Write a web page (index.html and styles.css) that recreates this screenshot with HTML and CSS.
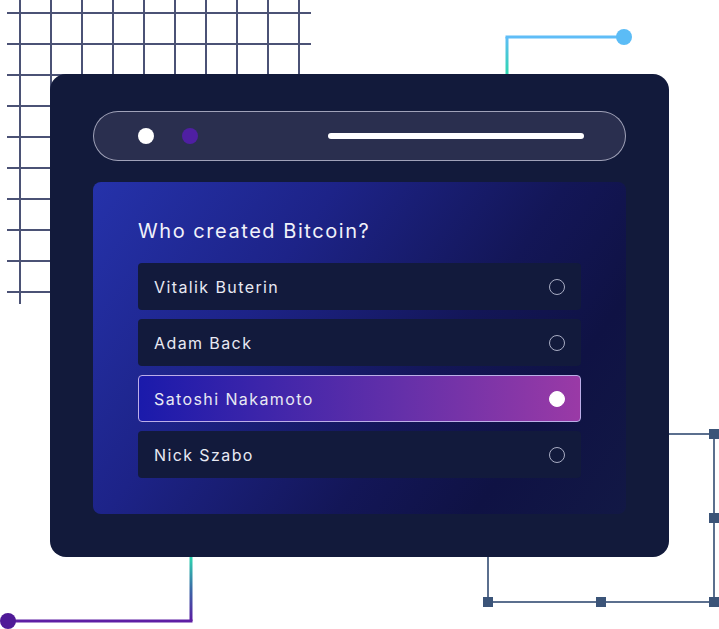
FILE: index.html
```html
<!DOCTYPE html>
<html lang="en">
<head>
<meta charset="utf-8">
<title>Quiz</title>
<link rel="stylesheet" href="styles.css">
</head>
<body>
<div class="stage">
  <svg class="decor" width="719" height="629" viewBox="0 0 719 629" aria-hidden="true">
    <defs>
      <linearGradient id="gTop" x1="0" y1="74" x2="0" y2="37" gradientUnits="userSpaceOnUse">
        <stop offset="0" stop-color="#2ed6b0"/>
        <stop offset="1" stop-color="#5fbdf7"/>
      </linearGradient>
      <linearGradient id="gBot" x1="0" y1="557" x2="0" y2="621" gradientUnits="userSpaceOnUse">
        <stop offset="0" stop-color="#2ed6b0"/>
        <stop offset="0.5" stop-color="#3a6aa6"/>
        <stop offset="1" stop-color="#5a1ca2"/>
      </linearGradient>
    </defs>
    <g class="grid" stroke="#4b5275" stroke-width="2">
      <line x1="20" y1="0" x2="20" y2="304"/>
      <line x1="51" y1="0" x2="51" y2="304"/>
      <line x1="82" y1="0" x2="82" y2="304"/>
      <line x1="113" y1="0" x2="113" y2="304"/>
      <line x1="144" y1="0" x2="144" y2="304"/>
      <line x1="175" y1="0" x2="175" y2="304"/>
      <line x1="206" y1="0" x2="206" y2="304"/>
      <line x1="237" y1="0" x2="237" y2="304"/>
      <line x1="268" y1="0" x2="268" y2="304"/>
      <line x1="299" y1="0" x2="299" y2="304"/>
      <line x1="7" y1="13" x2="311" y2="13"/>
      <line x1="7" y1="44" x2="311" y2="44"/>
      <line x1="7" y1="75" x2="311" y2="75"/>
      <line x1="7" y1="106" x2="311" y2="106"/>
      <line x1="7" y1="137" x2="311" y2="137"/>
      <line x1="7" y1="168" x2="311" y2="168"/>
      <line x1="7" y1="199" x2="311" y2="199"/>
      <line x1="7" y1="230" x2="311" y2="230"/>
      <line x1="7" y1="261" x2="311" y2="261"/>
      <line x1="7" y1="292" x2="311" y2="292"/>
    </g>
    <line x1="507" y1="80" x2="507" y2="37" stroke="url(#gTop)" stroke-width="3"/>
    <line x1="505.5" y1="37" x2="624" y2="37" stroke="#5fbdf7" stroke-width="3"/>
    <circle cx="624" cy="37" r="8" fill="#5bbcf6"/>

    <line x1="191" y1="550" x2="191" y2="621" stroke="url(#gBot)" stroke-width="3"/>
    <line x1="8" y1="621" x2="192.5" y2="621" stroke="#5e1fa4" stroke-width="3"/>
    <circle cx="8" cy="621" r="8" fill="#4f1a97"/>

    <path d="M660 434 H714 V602 H488 V540" fill="none" stroke="#5b6f8e" stroke-width="2"/>
    <g fill="#3b5478">
      <rect x="709" y="429" width="10" height="10"/>
      <rect x="709" y="513" width="10" height="10"/>
      <rect x="709" y="597" width="10" height="10"/>
      <rect x="596" y="597" width="10" height="10"/>
      <rect x="483" y="597" width="10" height="10"/>
    </g>
  </svg>

  <div class="card">
    <div class="bar">
      <span class="dot dot-white"></span>
      <span class="dot dot-purple"></span>
      <span class="bar-line"></span>
    </div>
    <div class="panel">
      <h2 class="question">Who created Bitcoin?</h2>
      <ul class="options">
        <li class="option"><span>Vitalik Buterin</span><span class="radio"></span></li>
        <li class="option"><span>Adam Back</span><span class="radio"></span></li>
        <li class="option selected"><span>Satoshi Nakamoto</span><span class="radio"></span></li>
        <li class="option"><span>Nick Szabo</span><span class="radio"></span></li>
      </ul>
    </div>
  </div>
</div>
</body>
</html>
```
FILE: styles.css
```css
* { box-sizing: border-box; }
html, body { margin: 0; padding: 0; background: #ffffff; }
body { font-family: Inter, "Open Sans", sans-serif; }

.stage {
  position: relative;
  width: 719px;
  height: 629px;
  overflow: hidden;
  padding: 74px 0 0 50px;
}
.decor {
  position: absolute;
  left: 0;
  top: 0;
}

.card {
  position: relative;
  width: 619px;
  height: 483px;
  background: #121a3b;
  border-radius: 16px;
  padding: 37px 43px 43px;
  display: flex;
  flex-direction: column;
  gap: 21px;
}

.bar {
  height: 50px;
  flex: none;
  border: 1px solid rgba(200, 202, 220, 0.75);
  background: #2a2f4f;
  border-radius: 26px;
  display: flex;
  align-items: center;
  padding: 0 41px 0 44px;
}
.dot {
  width: 16px;
  height: 16px;
  border-radius: 50%;
  flex: none;
}
.dot-white { background: #ffffff; }
.dot-purple { background: #4f1fa2; margin-left: 28px; }
.bar-line {
  margin-left: auto;
  width: 256px;
  height: 6px;
  border-radius: 3px;
  background: #ffffff;
}

.panel {
  flex: 1;
  border-radius: 8px;
  background: linear-gradient(125deg, #2532aa 0%, #1d2388 32%, #131657 62%, #0f1244 80%, #121845 100%);
  padding: 37px 45px 0;
}
.question {
  margin: 0 0 20px;
  font-size: 20px;
  line-height: 24px;
  font-weight: 400;
  letter-spacing: 1.55px;
  color: #f1f2fa;
}
.options {
  list-style: none;
  margin: 0;
  padding: 0;
  display: flex;
  flex-direction: column;
  gap: 9px;
}
.option {
  height: 47px;
  border-radius: 4px;
  background: #121a3c;
  display: flex;
  align-items: center;
  justify-content: space-between;
  padding: 0 16px;
  font-size: 16px;
  letter-spacing: 1.4px;
  color: #e8e9f3;
}
.radio {
  width: 16px;
  height: 16px;
  border-radius: 50%;
  border: 1.5px solid #a9adc4;
  flex: none;
}
.option.selected {
  background: linear-gradient(90deg, #1a1aab 0%, #3d25aa 28%, #6530a9 60%, #9a3aa6 100%);
  border: 1px solid #bcaee8;
  padding: 0 15px;
}
.option.selected .radio {
  background: #ffffff;
  border-color: #ffffff;
}
```
